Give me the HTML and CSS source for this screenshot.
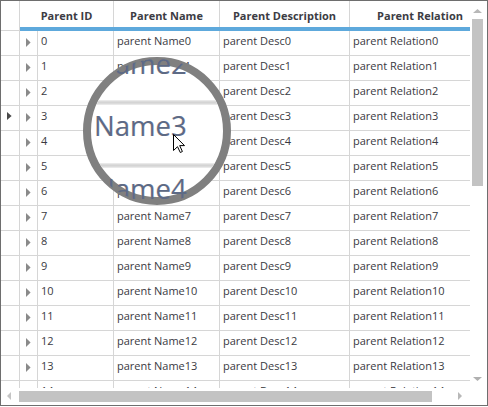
FILE: index.html
```
<!DOCTYPE html>
<html>
<head>
<meta charset="utf-8">
<link rel="stylesheet" href="styles.css">
</head>
<body>
<div class="grid">
  <div class="main">
    <div class="viewport">
      <div class="hdr">
        <div class="corner"></div>
        <div class="hwrap">
          <div class="hcells">
            <div class="hc w-idx">Parent ID</div>
            <div class="hc w-name">Parent Name</div>
            <div class="hc w-desc">Parent Description</div>
            <div class="hc w-rel">Parent Relation</div>
          </div>
          <div class="blue"></div>
        </div>
      </div>
      <div class="rows">
        <div class="row"><div class="rh"></div><div class="ex"><svg class="tri" width="5" height="9" viewBox="0 0 5 9"><path d="M0 0L4.6 4.5L0 9Z"/></svg></div><div class="c w-id">0</div><div class="c w-name">parent Name0</div><div class="c w-desc">parent Desc0</div><div class="c w-rel">parent Relation0</div></div>
        <div class="row"><div class="rh"></div><div class="ex"><svg class="tri" width="5" height="9" viewBox="0 0 5 9"><path d="M0 0L4.6 4.5L0 9Z"/></svg></div><div class="c w-id">1</div><div class="c w-name">parent Name1</div><div class="c w-desc">parent Desc1</div><div class="c w-rel">parent Relation1</div></div>
        <div class="row"><div class="rh"></div><div class="ex"><svg class="tri" width="5" height="9" viewBox="0 0 5 9"><path d="M0 0L4.6 4.5L0 9Z"/></svg></div><div class="c w-id">2</div><div class="c w-name">parent Name2</div><div class="c w-desc">parent Desc2</div><div class="c w-rel">parent Relation2</div></div>
        <div class="row"><div class="rh"><svg class="cur" width="5" height="8" viewBox="0 0 5 8"><path d="M0 0L4.6 4L0 8Z"/></svg></div><div class="ex"><svg class="tri" width="5" height="9" viewBox="0 0 5 9"><path d="M0 0L4.6 4.5L0 9Z"/></svg></div><div class="c w-id">3</div><div class="c w-name">parent Name3</div><div class="c w-desc">parent Desc3</div><div class="c w-rel">parent Relation3</div></div>
        <div class="row"><div class="rh"></div><div class="ex"><svg class="tri" width="5" height="9" viewBox="0 0 5 9"><path d="M0 0L4.6 4.5L0 9Z"/></svg></div><div class="c w-id">4</div><div class="c w-name">parent Name4</div><div class="c w-desc">parent Desc4</div><div class="c w-rel">parent Relation4</div></div>
        <div class="row"><div class="rh"></div><div class="ex"><svg class="tri" width="5" height="9" viewBox="0 0 5 9"><path d="M0 0L4.6 4.5L0 9Z"/></svg></div><div class="c w-id">5</div><div class="c w-name">parent Name5</div><div class="c w-desc">parent Desc5</div><div class="c w-rel">parent Relation5</div></div>
        <div class="row"><div class="rh"></div><div class="ex"><svg class="tri" width="5" height="9" viewBox="0 0 5 9"><path d="M0 0L4.6 4.5L0 9Z"/></svg></div><div class="c w-id">6</div><div class="c w-name">parent Name6</div><div class="c w-desc">parent Desc6</div><div class="c w-rel">parent Relation6</div></div>
        <div class="row"><div class="rh"></div><div class="ex"><svg class="tri" width="5" height="9" viewBox="0 0 5 9"><path d="M0 0L4.6 4.5L0 9Z"/></svg></div><div class="c w-id">7</div><div class="c w-name">parent Name7</div><div class="c w-desc">parent Desc7</div><div class="c w-rel">parent Relation7</div></div>
        <div class="row"><div class="rh"></div><div class="ex"><svg class="tri" width="5" height="9" viewBox="0 0 5 9"><path d="M0 0L4.6 4.5L0 9Z"/></svg></div><div class="c w-id">8</div><div class="c w-name">parent Name8</div><div class="c w-desc">parent Desc8</div><div class="c w-rel">parent Relation8</div></div>
        <div class="row"><div class="rh"></div><div class="ex"><svg class="tri" width="5" height="9" viewBox="0 0 5 9"><path d="M0 0L4.6 4.5L0 9Z"/></svg></div><div class="c w-id">9</div><div class="c w-name">parent Name9</div><div class="c w-desc">parent Desc9</div><div class="c w-rel">parent Relation9</div></div>
        <div class="row"><div class="rh"></div><div class="ex"><svg class="tri" width="5" height="9" viewBox="0 0 5 9"><path d="M0 0L4.6 4.5L0 9Z"/></svg></div><div class="c w-id">10</div><div class="c w-name">parent Name10</div><div class="c w-desc">parent Desc10</div><div class="c w-rel">parent Relation10</div></div>
        <div class="row"><div class="rh"></div><div class="ex"><svg class="tri" width="5" height="9" viewBox="0 0 5 9"><path d="M0 0L4.6 4.5L0 9Z"/></svg></div><div class="c w-id">11</div><div class="c w-name">parent Name11</div><div class="c w-desc">parent Desc11</div><div class="c w-rel">parent Relation11</div></div>
        <div class="row"><div class="rh"></div><div class="ex"><svg class="tri" width="5" height="9" viewBox="0 0 5 9"><path d="M0 0L4.6 4.5L0 9Z"/></svg></div><div class="c w-id">12</div><div class="c w-name">parent Name12</div><div class="c w-desc">parent Desc12</div><div class="c w-rel">parent Relation12</div></div>
        <div class="row"><div class="rh"></div><div class="ex"><svg class="tri" width="5" height="9" viewBox="0 0 5 9"><path d="M0 0L4.6 4.5L0 9Z"/></svg></div><div class="c w-id">13</div><div class="c w-name">parent Name13</div><div class="c w-desc">parent Desc13</div><div class="c w-rel">parent Relation13</div></div>
        <div class="row"><div class="rh"></div><div class="ex"><svg class="tri" width="5" height="9" viewBox="0 0 5 9"><path d="M0 0L4.6 4.5L0 9Z"/></svg></div><div class="c w-id">14</div><div class="c w-name">parent Name14</div><div class="c w-desc">parent Desc14</div><div class="c w-rel">parent Relation14</div></div>
      </div>
    </div>
    <div class="vscroll">
      <svg class="arr-up" width="9" height="4" viewBox="0 0 9 4"><path d="M4.5 0L9 4H0Z"/></svg>
      <div class="vthumb"></div>
      <svg class="arr-down" width="9" height="4" viewBox="0 0 9 4"><path d="M0 0H9L4.5 4Z"/></svg>
    </div>
  </div>
  <div class="hscroll">
    <svg class="arr-left" width="4" height="8" viewBox="0 0 4 8"><path d="M4 0V8L0 4Z"/></svg>
    <div class="hthumb"></div>
    <svg class="arr-right" width="4" height="8" viewBox="0 0 4 8"><path d="M0 0L4 4L0 8Z"/></svg>
  </div>

  <div class="lens">
    <div class="band b1"></div>
    <div class="band b2"></div>
  </div>
  <div class="lensview">
    <div class="mag m2">Name2</div>
    <div class="mag m3">Name3</div>
    <div class="mag m4">Name4</div>
  </div>
  <svg class="pointer" width="12" height="19" viewBox="0 0 12 19"><path d="M0.5 0.5V16.5L4.5 12.7L7.3 18.5L9.4 17.5L6.7 11.6H11.5Z" fill="#fff" stroke="#000" stroke-width="1" stroke-linejoin="miter"/></svg>
</div>
</body>
</html>
```
FILE: styles.css
```
* { box-sizing: border-box; }
html, body { margin: 0; padding: 0; background: #fff; }
body { font-family: "Open Sans", "Noto Sans", sans-serif; font-size: 11px; color: #3a3a3a; }

.grid {
  position: relative;
  width: 488px;
  height: 406px;
  border: 1px solid #6e6e6e;
  display: flex;
  flex-direction: column;
  background: #fff;
}
.main { display: flex; height: 387px; }
.viewport { width: 469px; height: 387px; overflow: hidden; }

.hdr { display: flex; height: 30px; }
.corner { width: 19px; height: 30px; border-right: 1px solid #d6d6d6; border-bottom: 1px solid #d6d6d6; flex: none; }
.hwrap { display: flex; flex-direction: column; flex: none; }
.hcells { display: flex; height: 26px; }
.hc {
  flex: none;
  height: 26px;
  padding-top: 7px;
  line-height: 15px;
  text-align: center;
  font-weight: 700;
  color: #3c3c44;
  border-right: 1px solid #d6d6d6;
  white-space: nowrap;
}
.blue { height: 4px; width: 450px; background: #5ea9dc; }

.w-idx { width: 94px; }
.w-id { width: 76px; }
.w-name { width: 106px; }
.w-desc { width: 130px; }
.w-rel { width: 141px; }

.row { display: flex; height: 25px; border-bottom: 1px solid #d6d6d6; width: 490px; }
.rh { flex: none; width: 19px; border-right: 1px solid #d6d6d6; padding: 6px 0 0 6px; }
.ex { flex: none; width: 18px; border-right: 1px solid #d6d6d6; padding: 7px 0 0 6px; }
.tri { display: block; fill: #8a8a8a; }
.cur { display: block; fill: #4a4a4a; }
.c {
  flex: none;
  padding: 2px 0 0 3px;
  line-height: 15px;
  border-right: 1px solid #d6d6d6;
  white-space: nowrap;
  color: #3a3a42;
}

.vscroll { width: 17px; height: 387px; display: flex; flex-direction: column; align-items: flex-start; }
.arr-up { display: block; margin: 8px 0 0 3px; fill: #b8b8b8; }
.vthumb { width: 11px; height: 167px; margin: 6px 0 0 2px; background: #c3c3c3; }
.arr-down { display: block; margin: auto 0 7px 3px; fill: #b0b0b0; }

.hscroll { height: 17px; display: flex; align-items: flex-start; }
.arr-left { display: block; margin: 4px 0 0 6px; fill: #c4c4c4; }
.hthumb { width: 413px; height: 11px; margin: 3px 0 0 8px; background: #c3c3c3; }
.arr-right { display: block; margin: 4px 0 0 26px; fill: #b8b8b8; }

.lens {
  position: absolute;
  left: 82px;
  top: 56px;
  width: 148px;
  height: 148px;
  border-radius: 50%;
  border: 8px solid #808080;
  background: #fff;
  overflow: hidden;
}
.lensview {
  position: absolute;
  left: 84px;
  top: 58px;
  width: 144px;
  height: 144px;
  border-radius: 50%;
  overflow: hidden;
}
.band {
  position: absolute;
  left: 0;
  right: 0;
  height: 5px;
  background: linear-gradient(rgba(230,230,230,0.6), #d4d4d4 40%, #d4d4d4 60%, rgba(230,230,230,0.6));
}
.b1 { top: 35px; }
.b2 { top: 98px; }
.mag {
  position: absolute;
  left: 9px;
  font-size: 27.5px;
  line-height: 27.5px;
  color: #5d6a85;
  white-space: nowrap;
  text-shadow: -0.5px 0 rgba(220, 150, 70, 0.25), 0.5px 0 rgba(70, 120, 220, 0.25);
}
.m2 { top: -9px; }
.m3 { top: 53px; }
.m4 { top: 116px; }

.pointer { position: absolute; left: 172px; top: 133px; display: block; }
```
